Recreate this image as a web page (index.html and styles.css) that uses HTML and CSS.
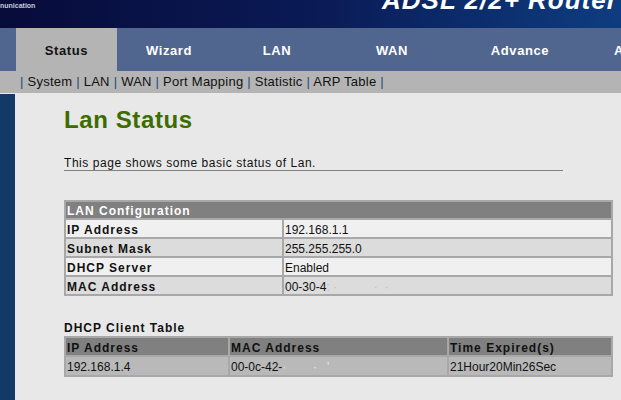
FILE: index.html
```html
<!DOCTYPE html>
<html lang="en">
<head>
    <meta charset="UTF-8">
    <title>Lan Status</title>
    <link rel="stylesheet" href="styles.css">
</head>
<body>
    <!-- Banner -->
    <div class="banner">
        <span class="brand">nunication</span>
        <span class="title">ADSL 2/2+ Router</span>
    </div>

    <!-- Menu utama -->
    <div class="tabs">
        <div class="tab active" style="width: 101px;">Status</div>
        <div class="tab" style="width: 104px;">Wizard</div>
        <div class="tab" style="width: 112px;">LAN</div>
        <div class="tab" style="width: 118px;">WAN</div>
        <div class="tab" style="width: 138px;">Advance</div>
        <div class="tab last">Admin</div>
    </div>

    <div class="subnav">
        <span class="sep">|</span> System <span class="sep">|</span> LAN <span class="sep">|</span> WAN <span class="sep">|</span> Port Mapping <span class="sep">|</span> Statistic <span class="sep">|</span> ARP Table <span class="sep">|</span>
    </div>

    <div class="main">
        <div class="side"></div>
        <div class="content">
            <h1 class="page-title">Lan Status</h1>
            <p class="intro">This page shows some basic status of Lan.</p>

            <table class="grid">
                <tr>
                    <th colspan="2" class="caption">LAN Configuration</th>
                </tr>
                <tr class="light">
                    <td class="label" style="width: 214px;">IP Address</td>
                    <td>192.168.1.1</td>
                </tr>
                <tr class="dark">
                    <td class="label">Subnet Mask</td>
                    <td>255.255.255.0</td>
                </tr>
                <tr class="light">
                    <td class="label">DHCP Server</td>
                    <td>Enabled</td>
                </tr>
                <tr class="dark">
                    <td class="label">MAC Address</td>
                    <td>00-30-4<span class="blur">: &middot; &nbsp; &nbsp; &nbsp; &nbsp; &nbsp; &middot; &nbsp;&middot;</span></td>
                </tr>
            </table>

            <h3 class="sub-title">DHCP Client Table</h3>
            <table class="grid clients">
                <tr class="head">
                    <td style="width: 160px;">IP Address</td>
                    <td style="width: 215px;">MAC Address</td>
                    <td>Time Expired(s)</td>
                </tr>
                <tr class="row">
                    <td>192.168.1.4</td>
                    <td>00-0c-42-<span class="blur">&middot; &nbsp; &nbsp; &nbsp; &nbsp;&middot; &nbsp; &#39;</span></td>
                    <td>21Hour20Min26Sec</td>
                </tr>
            </table>
        </div>
    </div>
</body>
</html>
```

FILE: styles.css
```css
body {
    margin: 0;
    width: 621px;
    height: 400px;
    overflow: hidden;
    background-color: #e8e8e8;
    font-family: "Liberation Sans", Arial, sans-serif;
}
.banner {
    height: 28px;
    display: flex;
    overflow: hidden;
    background: linear-gradient(to right, #070b3a 0%, #0a1a55 50%, #0d3d80 100%);
}
.brand {
    flex: 0 0 382px;
    font-size: 7px;
    font-weight: bold;
    color: #c8cad8;
    margin-top: 1px;
    line-height: 9px;
}
.title {
    white-space: nowrap;
    font-size: 26px;
    font-weight: bold;
    font-style: italic;
    color: white;
    line-height: 26px;
    margin-top: -13px;
    letter-spacing: 1px;
}
.tabs {
    height: 43px;
    display: flex;
    padding-left: 16px;
    background: #50668f;
    white-space: nowrap;
    overflow: hidden;
}
.tab {
    flex: 0 0 auto;
    text-align: center;
    padding-top: 2px;
    line-height: 41px;
    font-size: 13px;
    font-weight: bold;
    letter-spacing: 0.6px;
    color: white;
}
.tab.active {
    background: #b4b4b4;
    color: #111;
}
.tab.last {
    padding-left: 25px;
    text-align: left;
}
.subnav {
    height: 22px;
    line-height: 22px;
    background: #b4b4b4;
    padding-left: 20px;
    font-size: 13px;
    letter-spacing: 0.25px;
    color: #111;
    margin-bottom: 1px;
}
.sep {
    color: #1d4d80;
}
.main {
    display: flex;
    height: 306px;
}
.side {
    width: 15px;
    background: #133a66;
}
.content {
    padding-left: 49px;
}
.page-title {
    margin: 12px 0 0 0;
    font-size: 24px;
    line-height: 28px;
    color: #3d6c00;
    letter-spacing: 0.6px;
}
.intro {
    margin: 22px 0 0 0;
    width: 499px;
    font-size: 12px;
    line-height: 14px;
    letter-spacing: 0.55px;
    color: #111;
    border-bottom: 1px solid #808080;
}
.grid {
    width: 549px;
    margin-top: 29px;
    border-spacing: 2px;
    background: #a8a8a8;
    font-size: 12px;
    color: #111;
}
.grid td, .grid th {
    padding: 3px 1px 0 1px;
    line-height: 14px;
    height: 14px;
    text-align: left;
    vertical-align: top;
    white-space: nowrap;
    overflow: hidden;
}
.grid .caption {
    background: #808080;
    color: white;
    height: 13px;
    line-height: 13px;
    letter-spacing: 1px;
}
.label {
    font-weight: bold;
    letter-spacing: 1px;
}
.light td { background: #f0f0f0; }
.dark td { background: #dcdcdc; }
.blur {
    color: #c0c0c0;
}
.sub-title {
    margin: 25px 0 0 0;
    font-size: 12px;
    line-height: 14px;
    letter-spacing: 1px;
    color: #111;
}
.grid.clients {
    table-layout: fixed;
    margin-top: 1px;
}
.clients .head td {
    background: #808080;
    font-weight: bold;
    letter-spacing: 1px;
}
.clients .row td {
    background: #b9b9b9;
    height: 15px;
}
.clients .row .blur {
    color: #e8e8e8;
}
```
